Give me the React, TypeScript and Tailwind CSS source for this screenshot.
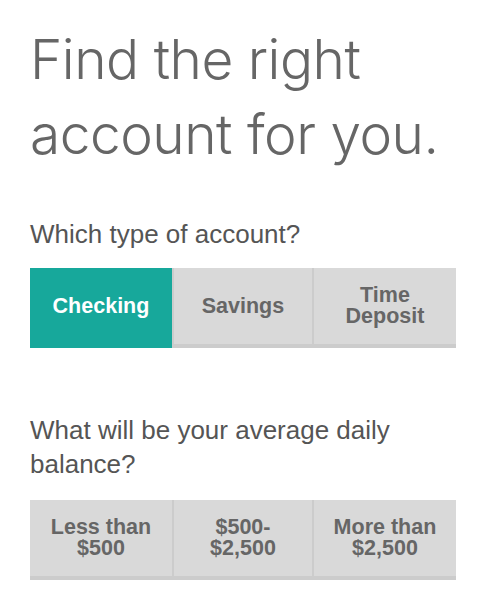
import React, { useState } from "react";

interface OptionGroupProps {
  options: string[][];
  selected: number | null;
  onSelect: (i: number) => void;
}

function OptionGroup({ options, selected, onSelect }: OptionGroupProps) {
  return (
    <div className="flex w-full">
      {options.map((lines, i) => {
        const active = selected === i;
        return (
          <button
            key={i}
            onClick={() => onSelect(i)}
            className={
              "flex h-[80px] w-1/3 flex-col items-center justify-center border-b-4 text-[21.5px] font-bold leading-[21px] " +
              (active
                ? "border-[#17a89b] bg-[#17a89b] text-white"
                : "border-[#cccccc] bg-[#d9d9d9] text-[#666666]") +
              (i === 1 ? " border-x-2 border-x-[#cccccc]" : "")
            }
          >
            {lines.map((l) => (
              <span key={l}>{l}</span>
            ))}
          </button>
        );
      })}
    </div>
  );
}

export default function App() {
  const [type, setType] = useState<number | null>(0);
  const [balance, setBalance] = useState<number | null>(null);

  return (
    <div
      className="min-h-screen bg-white pl-[30px] pr-[32px] pt-[22px] text-[#666666]"
      style={{ fontFamily: '"Liberation Sans", Arial, sans-serif' }}
    >
      <h1 className="font-['Inter',sans-serif] text-[55px] font-light leading-[75px] tracking-[-0.5px] text-[#666666]">
        Find the right
        <br />
        account for you.
      </h1>

      <p className="mt-[45px] text-[26px] leading-[34px] text-[#555555]">
        Which type of account?
      </p>
      <div className="mt-[17px]">
        <OptionGroup
          options={[["Checking"], ["Savings"], ["Time", "Deposit"]]}
          selected={type}
          onSelect={setType}
        />
      </div>

      <p className="mt-[65px] text-[26px] leading-[34px] text-[#555555]">
        What will be your average daily balance?
      </p>
      <div className="mt-[19px]">
        <OptionGroup
          options={[["Less than", "$500"], ["$500-", "$2,500"], ["More than", "$2,500"]]}
          selected={balance}
          onSelect={setBalance}
        />
      </div>
    </div>
  );
}
